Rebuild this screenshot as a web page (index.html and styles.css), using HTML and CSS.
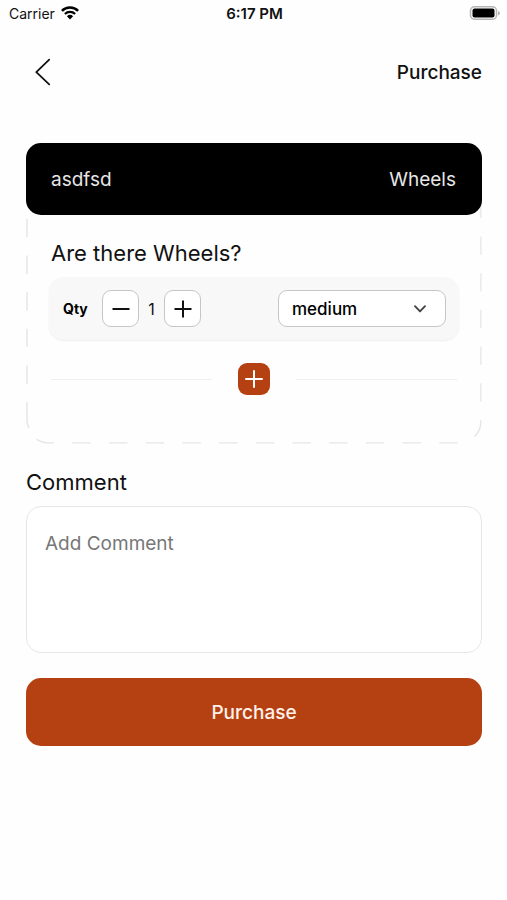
FILE: index.html
```html
<!DOCTYPE html>
<html lang="en">
<head>
<meta charset="utf-8">
<meta name="viewport" content="width=device-width, initial-scale=1">
<title>Purchase</title>
<link rel="stylesheet" href="styles.css">
</head>
<body>
<div class="status">
  <div class="carrier">
    <span>Carrier</span>
    <svg width="18" height="14" viewBox="0 0 18 14" fill="none" stroke="#000" aria-hidden="true">
      <path d="M.9 4.8a11.6 11.6 0 0 1 16.2 0" stroke-width="2.5"/>
      <path d="M3.9 8a7.3 7.3 0 0 1 10.2 0" stroke-width="2.3"/>
      <path d="M9 13.5 5.9 10.3a4.5 4.5 0 0 1 6.2 0Z" fill="#000" stroke="none"/>
    </svg>
  </div>
  <span class="time">6:17 PM</span>
  <svg class="battery" width="31" height="14" viewBox="0 0 31 14" aria-hidden="true">
    <rect x="1.5" y=".75" width="26" height="12.5" rx="4" fill="#fff" stroke="#b5b5b5" stroke-width="1.5"/>
    <rect x="3.5" y="2.5" width="22" height="9" rx="2" fill="#000"/>
    <path d="M29 5v4.4q2-.7 2-2.2t-2-2.2Z" fill="#b5b5b5"/>
  </svg>
</div>

<header class="topbar">
  <button class="back" type="button" aria-label="Back">
    <svg width="16" height="28" viewBox="0 0 16 28" fill="none" stroke="#111" stroke-width="1.8" stroke-linecap="round" stroke-linejoin="round"><path d="M14.2 1.6 1.3 14.2 14.2 26.4"/></svg>
  </button>
  <h1>Purchase</h1>
</header>

<main>
  <section class="card">
    <svg class="outline" aria-hidden="true">
      <rect class="dashes" x="1" y="1" rx="22"/>
      <path d="M1 76V242" stroke-dasharray="18.3 18.3"/>
      <path d="M1 259V277Q1 282 3 285"/>
    </svg>
    <div class="card-head"><span>asdfsd</span><span>Wheels</span></div>
    <div class="card-body">
      <h2>Are there Wheels?</h2>
      <div class="item">
        <span class="qty">Qty</span>
        <button class="step" type="button" aria-label="Decrease">
          <svg width="20" height="20" viewBox="0 0 20 20" stroke="#111" stroke-width="2"><path d="M1.5 10h17"/></svg>
        </button>
        <output class="count">1</output>
        <button class="step" type="button" aria-label="Increase">
          <svg width="20" height="20" viewBox="0 0 20 20" stroke="#111" stroke-width="2"><path d="M1.5 10h17M10 1.5v17"/></svg>
        </button>
        <div class="size">
          <select aria-label="Size"><option>small</option><option selected>medium</option><option>large</option></select>
          <svg class="caret" width="14" height="10" viewBox="0 0 14 10" fill="none" stroke="#444" stroke-width="1.9" stroke-linecap="round" stroke-linejoin="round"><path d="M2 2.2 7 7.4l5-5.2"/></svg>
        </div>
      </div>
      <div class="add-row">
        <button class="add" type="button" aria-label="Add item">
          <svg width="20" height="20" viewBox="0 0 20 20" stroke="#fff" stroke-width="2" stroke-linecap="round"><path d="M2 10h16M10 2v16"/></svg>
        </button>
      </div>
    </div>
  </section>

  <label class="comment-label" for="comment">Comment</label>
  <textarea id="comment" placeholder="Add Comment"></textarea>
  <button class="submit" type="button">Purchase</button>
</main>
</body>
</html>
```
FILE: styles.css
```css
* { box-sizing: border-box; }

body {
  margin: 0;
  background: #fefefe;
  color: #111;
  font-family: Inter, "Liberation Sans", sans-serif;
}

button, select, textarea { font: inherit; color: inherit; margin: 0; }
button { display: flex; align-items: center; justify-content: center; padding: 0; border: 0; background: none; cursor: pointer; }
h1, h2 { margin: 0; }
svg { display: block; }

.status {
  display: grid;
  grid-template-columns: 1fr auto 1fr;
  align-items: center;
  height: 26px;
  padding: 0 7px 0 9px;
  font-size: 14px;
}
.carrier { display: flex; align-items: center; gap: 6px; }
.time { font-size: 15px; font-weight: 600; }
.battery { justify-self: end; }

.topbar {
  display: flex;
  align-items: center;
  justify-content: space-between;
  height: 92px;
  padding: 0 25px 0 26px;
}
.back { width: 34px; height: 44px; }
.topbar h1 { font-size: 19px; font-weight: 500; }

main { padding: 25px 25px 32px 26px; }

.card { position: relative; }
.outline {
  position: absolute;
  inset: 0;
  width: 100%;
  height: 100%;
  fill: none;
  stroke: #e6e6e6;
  stroke-width: 1.5;
}
.dashes {
  width: calc(100% - 2px);
  height: calc(100% - 2px);
  stroke-dasharray: 18.3 18.4;
  stroke-dashoffset: -1px;
  clip-path: inset(0 0 0 10px);
}
.card-head {
  position: relative;
  display: flex;
  align-items: center;
  justify-content: space-between;
  height: 72px;
  padding: 0 26px 0 25px;
  border-radius: 15px;
  background: #000;
  color: #e6e6e6;
  font-size: 19px;
}
.card-body { position: relative; padding: 24px 23px 49px; }
.card-body h2 { padding-left: 2px; font-size: 22px; font-weight: 400; line-height: 28px; }

.item {
  display: flex;
  align-items: center;
  height: 63px;
  margin-top: 10px;
  padding: 0 13px 0 14px;
  border-radius: 15px;
  background: #f8f8f8;
  box-shadow: 0 1px 2px #eee;
}
.qty { width: 39px; font-size: 14px; font-weight: 700; color: #000; }
.step { width: 37px; height: 37px; border: 1px solid #c6c6c6; border-radius: 9px; background: #fff; }
.count { width: 25px; text-align: center; font-size: 16px; }
.size { position: relative; width: 168px; margin-left: auto; }
.size select {
  display: block;
  width: 100%;
  height: 37px;
  padding: 0 36px 0 13px;
  border: 1px solid #c6c6c6;
  border-radius: 9px;
  background: #fff;
  appearance: none;
  font-size: 17px;
  font-weight: 500;
  color: #000;
}
.caret { position: absolute; top: 14px; right: 19px; pointer-events: none; }

.add-row { display: flex; align-items: center; gap: 26px; margin-top: 23px; padding: 0 2px; }
.add-row::before, .add-row::after { content: ""; flex: 1; height: 1px; background: #efefef; }
.add { width: 32px; height: 32px; border-radius: 9px; background: #b54012; }

.comment-label { display: block; margin-top: 22px; font-size: 22px; line-height: 32px; }
textarea {
  display: block;
  width: 100%;
  height: 147px;
  margin-top: 8px;
  padding: 25px 18px;
  border: 1px solid #e6e6e6;
  border-radius: 15px;
  background: #fff;
  font-size: 19px;
  resize: none;
}
textarea::placeholder { color: #777; }

.submit {
  width: 100%;
  height: 68px;
  margin-top: 25px;
  border-radius: 15px;
  background: #b54012;
  color: #fff2ea;
  font-size: 19px;
  font-weight: 500;
}
```
